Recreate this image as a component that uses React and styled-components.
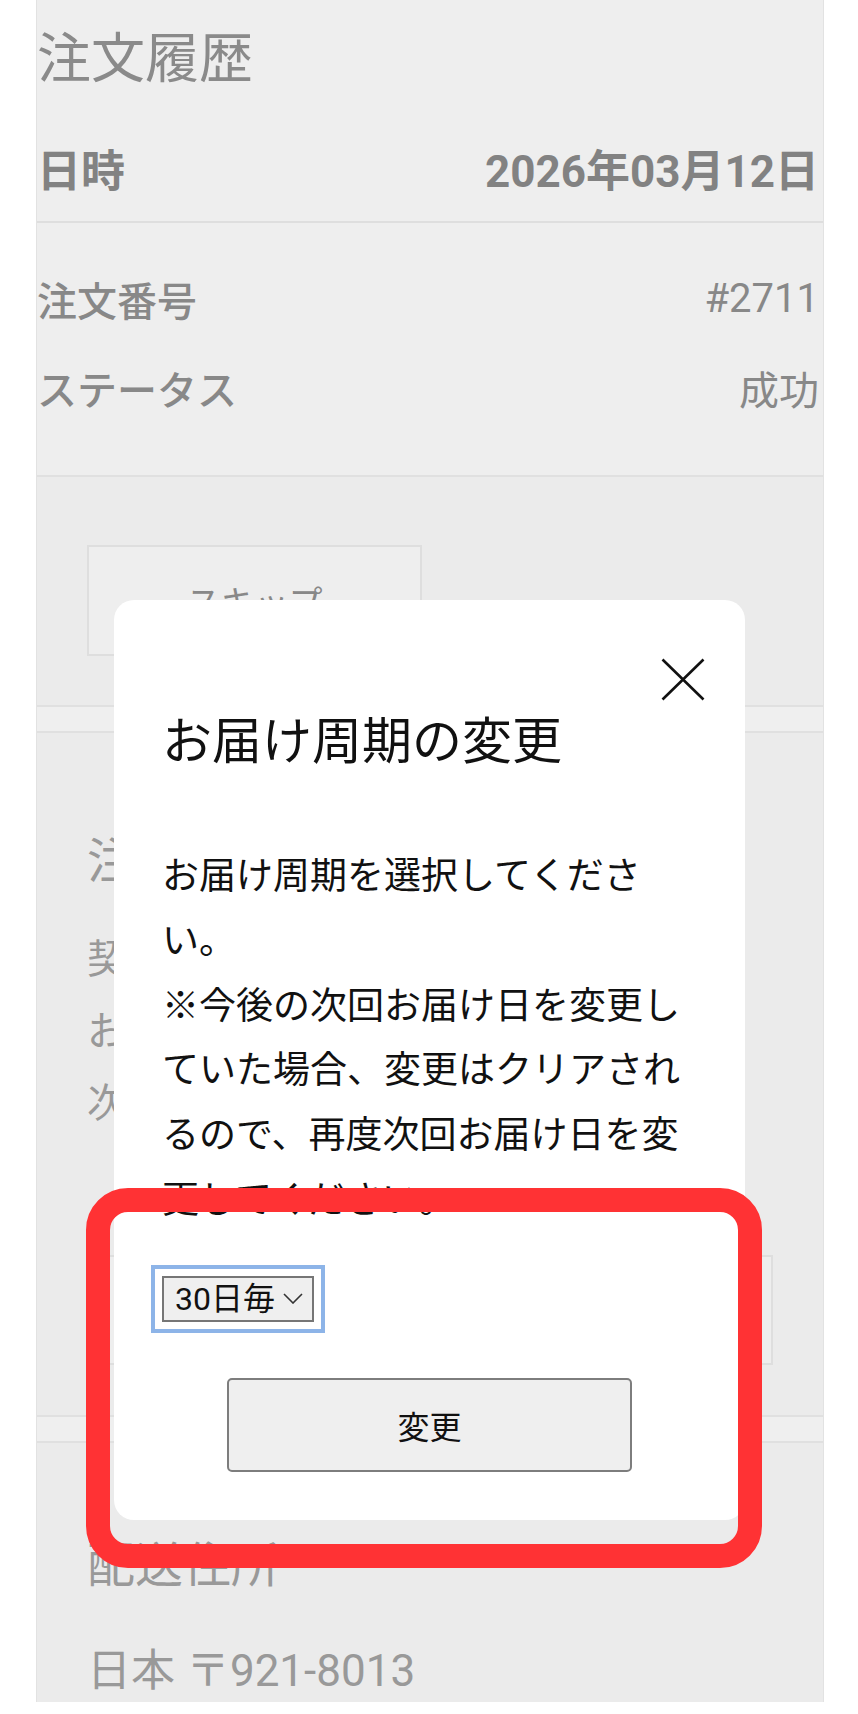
import React from "react";
import styled, { createGlobalStyle } from "styled-components";

const GlobalStyle = createGlobalStyle`
  html, body { margin: 0; padding: 0; background: #ffffff; }
  body { font-family: Roboto, "Noto Sans CJK JP", sans-serif; }
  *, *::before, *::after { box-sizing: border-box; }
`;

const Page = styled.div`
  position: relative;
  width: 858px;
  height: 1714px;
  overflow: hidden;
  background: #ffffff;
`;

const Column = styled.main`
  margin-left: 36px;
  width: 788px;
  height: 1702px;
  overflow: hidden;
  background: #efefef;
  border-left: 1.5px solid #e2e2e2;
  border-right: 1.5px solid #e2e2e2;
  display: flex;
  flex-direction: column;
`;

const Summary = styled.section`
  flex-shrink: 0;
  background: #eeeeee;
`;

const Header = styled.div`
  border-bottom: 2px solid #dedede;
  padding-bottom: 19px;
`;

const Title = styled.h1`
  margin: 0;
  padding-top: 20px;
  font-family: "Noto Sans CJK JP", sans-serif;
  font-size: 54px;
  line-height: 70px;
  font-weight: 400;
  color: #8a8a8a;
`;

const DateRow = styled.div`
  margin-top: 52px;
  display: flex;
  justify-content: space-between;
  align-items: center;
  padding-right: 4px;
  font-size: 44px;
  line-height: 60px;
  font-weight: 700;
  color: #828282;
`;

const InfoList = styled.dl`
  margin: 0;
  padding: 31px 4px 43px 0;
`;

const InfoRow = styled.div`
  height: 89px;
  display: flex;
  justify-content: space-between;
  align-items: center;
  font-size: 40px;
  color: #888888;
`;

const Label = styled.dt`
  font-weight: 500;
`;

const Value = styled.dd`
  margin: 0;
  font-weight: 400;
`;

const Card = styled.section`
  flex-shrink: 0;
  margin-top: ${(p) => p.$gap || 0}px;
  padding: ${(p) => p.$top}px 50px ${(p) => p.$bottom}px;
  background: #ebebeb;
  border-top: 2px solid #e0e0e0;
  border-bottom: 2px solid #e0e0e0;
  font-family: "Noto Sans CJK JP", sans-serif;
  color: #999999;
`;

const OutlineButton = styled.button`
  display: flex;
  align-items: center;
  justify-content: center;
  width: ${(p) => p.$width};
  height: ${(p) => p.$height}px;
  margin-top: ${(p) => p.$gap || 0}px;
  padding: 0;
  background: #eeeeee;
  border: 2px solid #dedede;
  font-family: "Noto Sans CJK JP", sans-serif;
  font-size: 34px;
  color: #888888;
`;

const SectionHeading = styled.h2`
  margin: 0;
  font-size: 48px;
  line-height: 60px;
  font-weight: 400;
  color: #999999;
`;

const DetailRow = styled.p`
  margin: ${(p) => p.$gap || 0}px 0 0;
  font-size: 40px;
  line-height: 72px;
  color: #999999;
  white-space: nowrap;
`;

const Address = styled.p`
  margin: 50px 0 0;
  font-family: Roboto, "Noto Sans CJK JP", sans-serif;
  font-size: 44px;
  line-height: 60px;
  color: #999999;
`;

const Modal = styled.div`
  position: absolute;
  left: 114px;
  top: 600px;
  width: 631px;
  z-index: 2;
  padding: 58px 48px 48px;
  background: #ffffff;
  border-radius: 20px;
  font-family: "Noto Sans CJK JP", sans-serif;
  color: #111111;
`;

const CloseRow = styled.div`
  display: flex;
  justify-content: flex-end;
  height: 43px;
  margin-right: -8px;
`;

const CloseButton = styled.button`
  width: 44px;
  height: 43px;
  padding: 0;
  border: none;
  background: none;
  display: block;
`;

const ModalTitle = styled.h2`
  margin: 0;
  font-size: 50px;
  line-height: 72px;
  font-weight: 400;
`;

const ModalBody = styled.p`
  margin: 68px 0 0;
  font-size: 37px;
  line-height: 64.8px;
`;

const SelectWrap = styled.div`
  position: relative;
  width: 152px;
  margin-top: 46px;
`;

const Select = styled.select`
  appearance: none;
  -webkit-appearance: none;
  display: block;
  width: 152px;
  height: 46px;
  margin: 0;
  padding: 0 0 0 11px;
  border: 2px solid #767676;
  border-radius: 0;
  background: #efefef;
  font-family: Roboto, "Noto Sans CJK JP", sans-serif;
  font-size: 32px;
  color: #111111;
  outline: 4px solid #8db4e8;
  outline-offset: 7px;
`;

const Chevron = styled.svg`
  position: absolute;
  right: 11px;
  top: 17px;
  pointer-events: none;
`;

const SubmitButton = styled.button`
  display: flex;
  align-items: center;
  justify-content: center;
  width: 405px;
  height: 94px;
  margin: 56px auto 0;
  padding: 0;
  border: 2px solid #7d7d7d;
  border-radius: 5px;
  background: #efefef;
  font-family: "Noto Sans CJK JP", sans-serif;
  font-size: 32px;
  color: #111111;
`;

const Annotation = styled.div`
  position: absolute;
  left: 86px;
  top: 1188px;
  width: 676px;
  height: 380px;
  z-index: 3;
  border: 24px solid #ff3234;
  border-radius: 42px;
  pointer-events: none;
`;

export default function App() {
  return (
    <>
      <GlobalStyle />
      <Page>
        <Column>
          <Summary>
            <Header>
              <Title>注文履歴</Title>
              <DateRow>
                <span>日時</span>
                <span>2026年03月12日</span>
              </DateRow>
            </Header>
            <InfoList>
              <InfoRow>
                <Label>注文番号</Label>
                <Value>#2711</Value>
              </InfoRow>
              <InfoRow>
                <Label>ステータス</Label>
                <Value>成功</Value>
              </InfoRow>
            </InfoList>
          </Summary>

          <Card $top={68} $bottom={49}>
            <OutlineButton $width="335px" $height={111}>スキップ</OutlineButton>
          </Card>

          <Card $gap={24} $top={94} $bottom={50}>
            <SectionHeading>注文内容</SectionHeading>
            <DetailRow $gap={33}>契約日 2026/03/12</DetailRow>
            <DetailRow>お届け周期 30日毎</DetailRow>
            <DetailRow>次回お届け日 04/11</DetailRow>
            <OutlineButton $width="100%" $height={110} $gap={119}>お届け周期を変更</OutlineButton>
          </Card>

          <Card $gap={24} $top={88} $bottom={40}>
            <SectionHeading>配送住所</SectionHeading>
            <Address>日本 〒921-8013</Address>
          </Card>
        </Column>

        <Modal role="dialog" aria-label="お届け周期の変更">
          <CloseRow>
            <CloseButton aria-label="閉じる">
              <svg width="44" height="43" viewBox="0 0 44 43">
                <path d="M1.5 1.5 L42.5 41.5 M42.5 1.5 L1.5 41.5" stroke="#111" strokeWidth="2.6" fill="none" />
              </svg>
            </CloseButton>
          </CloseRow>
          <ModalTitle>お届け周期の変更</ModalTitle>
          <ModalBody>
            お届け周期を選択してください。
            <br />
            ※今後の次回お届け日を変更していた場合、変更はクリアされるので、再度次回お届け日を変更してください。
          </ModalBody>
          <SelectWrap>
            <Select defaultValue="30">
              <option value="30">30日毎</option>
              <option value="60">60日毎</option>
              <option value="90">90日毎</option>
            </Select>
            <Chevron width="20" height="11" viewBox="0 0 20 11">
              <path d="M1 1 L10 10 L19 1" stroke="#333" strokeWidth="1.6" fill="none" />
            </Chevron>
          </SelectWrap>
          <SubmitButton>変更</SubmitButton>
        </Modal>

        <Annotation />
      </Page>
    </>
  );
}
